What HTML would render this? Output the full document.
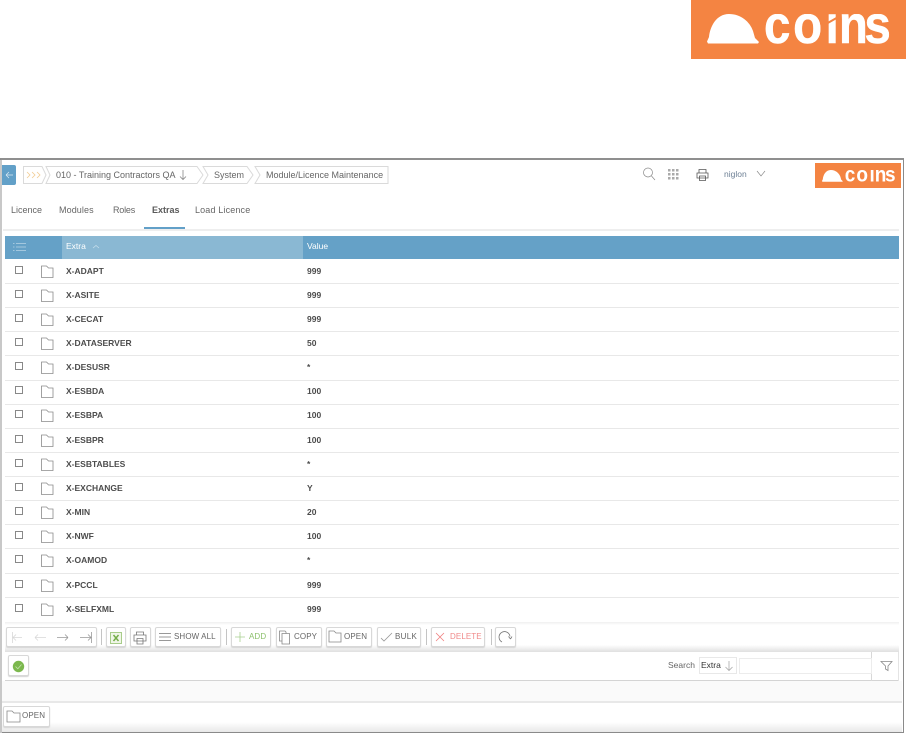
<!DOCTYPE html>
<html><head><meta charset="utf-8"><style>
html,body{margin:0;padding:0;background:#fff}
body{width:906px;height:733px;position:relative;overflow:hidden;font-family:"Liberation Sans",sans-serif;color:#444}
div,span,svg{position:absolute}
.t{white-space:nowrap;font-size:9px;line-height:12px;color:#666}
.k{left:66px;font-size:8.5px;font-weight:bold;color:#4c4c4c;white-space:nowrap;line-height:12px}
.v{left:307px;font-size:8.5px;font-weight:bold;color:#4c4c4c;white-space:nowrap;line-height:12px}
.s{left:5px;width:894px;height:1px;background:#e8e8e8}
.c{left:15px;width:6px;height:6px;border:1px solid #888;background:#fff}
.b{height:20px;top:627px;background:#fff;border:1px solid #d8d8d8;border-radius:2px;box-shadow:0 1px 1px #d4d4d4;box-sizing:border-box}
.l{font-size:8px;letter-spacing:.1px;white-space:nowrap;line-height:10px;color:#666;top:632px}
.sp{top:629px;width:1px;height:16px;background:#c4c4c4}
</style></head><body>
<svg style="left:691px;top:0" width="215" height="59" viewBox="0 0 215 59"><rect width="215" height="59" fill="#f48442"/><path d="M16 41.500L18 37C19 27 25 14 38 14C50 14 59 22 62 31L64 38L68 42L67 43.500H17Z" fill="#fff"/><text transform="translate(0 43) scale(.88 1)" x="83 116 153 168 197" font-family="Liberation Sans" font-weight="bold" font-size="54" fill="#fff" stroke="#fff" stroke-width=".5">coins</text><rect x="70" y="0" width="145" height="14" fill="#f48442"/><path d="M135 24L149 16" stroke="#f48442" stroke-width="2"/></svg>

<div style="left:0;top:158px;width:904px;height:575px;box-sizing:border-box;border:1px solid #8a8a8a;border-top:2px solid #8f8f8f;background:#fff"></div>
<div style="left:0;top:160px;width:2px;height:573px;background:#c8c8c8"></div>

<svg style="left:2px;top:165px" width="14" height="20"><path d="M0 0H12Q14 0 14 2V18Q14 20 12 20H0Z" fill="#62a0c8"/><path d="M4 10H11M4 10L7 7M4 10L7 13" stroke="#dcebf4" fill="none" stroke-width=".7"/></svg>
<svg style="left:22px;top:165px" width="370" height="21" fill="#fff" stroke="#dadada" stroke-width="1"><path d="M1.500 1.500H20L24 10L20 18.500H1.500Z"/><path d="M24 1.500H175L181 10L175 18.500H24L28 10Z"/><path d="M181 1.500H225L231 10L225 18.500H181L186 10Z"/><path d="M233 1.500H366V18.500H233L238 10Z"/><path d="M5 7L8 10L5 13M10 7L13 10L10 13M15 7L18 10L15 13" stroke="#f2cc92" fill="none" stroke-width=".8"/><path d="M161 5V14.500M158 11.500L161 14.500L164 11.500" stroke="#888" fill="none" stroke-width=".8"/></svg>
<div class="t" style="left:56px;top:169px">010 - Training Contractors QA</div>
<div class="t" style="left:214px;top:169px">System</div>
<div class="t" style="left:266px;top:169px">Module/Licence Maintenance</div>

<svg style="left:640px;top:165px" width="130" height="18" fill="none" stroke="#888" stroke-width=".7"><circle cx="8" cy="7.500" r="4.500"/><path d="M11.500 11L15 15"/><g fill="#aaa" stroke="none"><rect x="28" y="4" width="2.500" height="2.500"/><rect x="32" y="4" width="2.500" height="2.500"/><rect x="36" y="4" width="2.500" height="2.500"/><rect x="28" y="8" width="2.500" height="2.500"/><rect x="32" y="8" width="2.500" height="2.500"/><rect x="36" y="8" width="2.500" height="2.500"/><rect x="28" y="12" width="2.500" height="2.500"/><rect x="32" y="12" width="2.500" height="2.500"/><rect x="36" y="12" width="2.500" height="2.500"/></g><path d="M59 8V4.500h7V8M57 8h11v5h-11zM59.500 11h6v4.500h-6z" stroke="#555" stroke-width=".8"/><path d="M117 6L121 11L125 6"/></svg>
<div class="t" style="left:724px;top:168px;color:#6f8196;font-size:8.500px">niglon</div>
<svg style="left:815px;top:163px" width="86" height="25" viewBox="0 0 86 25"><rect width="86" height="25" fill="#f48442"/><g transform="translate(.6 1.400) scale(.4)"><path d="M16 41.500L18 37C19 27 25 14 38 14C50 14 59 22 62 31L64 38L68 42L67 43.500H17Z" fill="#fff"/><text transform="translate(0 43) scale(.88 1)" x="83 116 153 168 197" font-family="Liberation Sans" font-weight="bold" font-size="54" fill="#fff">coins</text><rect x="70" y="0" width="145" height="14" fill="#f48442"/></g></svg>

<div class="t" style="left:11px;top:204px">Licence</div>
<div class="t" style="left:59px;top:204px;letter-spacing:.1px">Modules</div>
<div class="t" style="left:113px;top:204px;letter-spacing:-.2px">Roles</div>
<div class="t" style="left:152px;top:204px;font-weight:bold;color:#5a5a5a">Extras</div>
<div class="t" style="left:195px;top:204px;letter-spacing:.15px">Load Licence</div>
<div style="left:3px;top:229px;width:896px;height:2px;background:#eee"></div>
<div style="left:144px;top:227px;width:41px;height:2px;background:#62a0c8"></div>

<div style="left:5px;top:236px;width:894px;height:23px;background:#65a1c7"></div>
<div style="left:62px;top:236px;width:241px;height:23px;background:#8ab8d3"></div>
<svg style="left:12px;top:241px" width="16" height="12" stroke="#b8d4e6" fill="none" stroke-width=".8"><path d="M1 2.500H2.500M1 6H2.500M1 9.500H2.500M4 2.500H14M4 6H14M4 9.500H14"/></svg>
<div class="t" style="left:66px;top:240px;color:#fff;font-size:8.500px">Extra</div>
<svg style="left:92px;top:244px" width="10" height="6" stroke="#c7dfec" fill="none" stroke-width=".8"><path d="M1 4L4 1.500L7 4"/></svg>
<div class="t" style="left:307px;top:240px;color:#fff;font-size:8.500px">Value</div>

<div class="s" style="top:283px"></div><div class="s" style="top:307px"></div><div class="s" style="top:331px"></div><div class="s" style="top:355px"></div><div class="s" style="top:380px"></div><div class="s" style="top:404px"></div><div class="s" style="top:428px"></div><div class="s" style="top:452px"></div><div class="s" style="top:476px"></div><div class="s" style="top:500px"></div><div class="s" style="top:524px"></div><div class="s" style="top:548px"></div><div class="s" style="top:573px"></div><div class="s" style="top:597px"></div>

<div class="c" style="top:266px"></div><div class="c" style="top:290px"></div><div class="c" style="top:314px"></div><div class="c" style="top:338px"></div><div class="c" style="top:362px"></div><div class="c" style="top:386px"></div><div class="c" style="top:410px"></div><div class="c" style="top:435px"></div><div class="c" style="top:459px"></div><div class="c" style="top:483px"></div><div class="c" style="top:507px"></div><div class="c" style="top:531px"></div><div class="c" style="top:555px"></div><div class="c" style="top:580px"></div><div class="c" style="top:604px"></div>

<svg style="left:40px;top:264px" width="15" height="352" fill="none" stroke="#8a8a8a" stroke-width=".8"><defs><path id="f" d="M1.500 1H6.500L8.500 3H13V12.500H1.500Z"/></defs><use href="#f" y="1"/><use href="#f" y="25"/><use href="#f" y="49"/><use href="#f" y="73"/><use href="#f" y="97"/><use href="#f" y="121"/><use href="#f" y="145"/><use href="#f" y="170"/><use href="#f" y="194"/><use href="#f" y="218"/><use href="#f" y="242"/><use href="#f" y="266"/><use href="#f" y="290"/><use href="#f" y="315"/><use href="#f" y="339"/></svg>

<div class="k" style="top:265px">X-ADAPT</div><div class="v" style="top:265px">999</div>
<div class="k" style="top:289px">X-ASITE</div><div class="v" style="top:289px">999</div>
<div class="k" style="top:313px">X-CECAT</div><div class="v" style="top:313px">999</div>
<div class="k" style="top:337px">X-DATASERVER</div><div class="v" style="top:337px">50</div>
<div class="k" style="top:361px">X-DESUSR</div><div class="v" style="top:361px">*</div>
<div class="k" style="top:385px">X-ESBDA</div><div class="v" style="top:385px">100</div>
<div class="k" style="top:409px">X-ESBPA</div><div class="v" style="top:409px">100</div>
<div class="k" style="top:434px">X-ESBPR</div><div class="v" style="top:434px">100</div>
<div class="k" style="top:458px">X-ESBTABLES</div><div class="v" style="top:458px">*</div>
<div class="k" style="top:482px">X-EXCHANGE</div><div class="v" style="top:482px">Y</div>
<div class="k" style="top:506px">X-MIN</div><div class="v" style="top:506px">20</div>
<div class="k" style="top:530px">X-NWF</div><div class="v" style="top:530px">100</div>
<div class="k" style="top:554px">X-OAMOD</div><div class="v" style="top:554px">*</div>
<div class="k" style="top:579px">X-PCCL</div><div class="v" style="top:579px">999</div>
<div class="k" style="top:603px">X-SELFXML</div><div class="v" style="top:603px">999</div>

<div style="left:5px;top:622px;width:894px;height:30px;background:linear-gradient(#efefef 0,#fff 3px,#fff 23px,#e0e0e0 30px)"></div>
<div class="b" style="left:6px;width:91px"></div>
<svg style="left:10px;top:630px" width="84" height="14" fill="none" stroke="#d8d8d8" stroke-width=".8"><path d="M2.500 2V13M3 7.500H12M3 7.500L6 4.500M3 7.500L6 10.500"/><path d="M25 7.500H36M25 7.500L28 4.500M25 7.500L28 10.500"/><path d="M47 7.500H58M58 7.500L55 4.500M58 7.500L55 10.500" stroke="#999"/><path d="M70 7.500H81M81 7.500L78 4.500M81 7.500L78 10.500M81.500 2V13" stroke="#999"/></svg>
<div class="sp" style="left:101px"></div>
<div class="b" style="left:106px;width:20px"></div>
<svg style="left:109px;top:631px" width="14" height="14"><rect x="1.500" y="1.500" width="11" height="11" fill="#f0f6e8" stroke="#a8cc8a"/><path d="M4.500 4L9.500 10M9.500 4L4.500 10" stroke="#74ad48" stroke-width="1.500"/></svg>
<div class="b" style="left:130px;width:21px"></div>
<svg style="left:132px;top:630px" width="16" height="15" fill="none" stroke="#777" stroke-width=".8"><path d="M4.500 5V2H11.500V5M2 5H14V11H2ZM5 8.500H11V14H5Z"/></svg>
<div class="b" style="left:155px;width:66px"></div>
<svg style="left:158px;top:631px" width="14" height="12" stroke="#777" fill="none" stroke-width=".8"><path d="M1 2.500H13M1 6H13M1 9.500H13"/></svg>
<div class="l" style="left:174px">SHOW ALL</div>
<div class="sp" style="left:226px"></div>
<div class="b" style="left:231px;width:40px"></div>
<svg style="left:234px;top:631px" width="12" height="12" stroke="#a8d090" fill="none" stroke-width=".8"><path d="M6 1V11M1 6H11"/></svg>
<div class="l" style="left:249px;color:#8cc06c">ADD</div>
<div class="b" style="left:276px;width:46px"></div>
<svg style="left:278px;top:629px" width="14" height="16" fill="none" stroke="#888" stroke-width=".8"><path d="M1.500 2H7L8 3V12H1.500Z"/><path d="M4 4.500H11.500V15H4Z" fill="#fff"/></svg>
<div class="l" style="left:294px">COPY</div>
<div class="b" style="left:326px;width:46px"></div>
<svg style="left:328px;top:630px" width="15" height="14" fill="none" stroke="#888" stroke-width=".8"><path d="M1 1H6L8 3H13V12H1Z"/></svg>
<div class="l" style="left:344px">OPEN</div>
<div class="b" style="left:377px;width:44px"></div>
<svg style="left:380px;top:631px" width="14" height="12" fill="none" stroke="#999" stroke-width=".8"><path d="M1 7L4 10L12 2"/></svg>
<div class="l" style="left:395px;letter-spacing:.3px">BULK</div>
<div class="sp" style="left:426px"></div>
<div class="b" style="left:431px;width:54px"></div>
<svg style="left:434px;top:631px" width="12" height="12" stroke="#f08080" fill="none" stroke-width=".8"><path d="M2 2L10 10M10 2L2 10"/></svg>
<div class="l" style="left:450px;color:#f08a8a">DELETE</div>
<div class="sp" style="left:491px"></div>
<div class="b" style="left:495px;width:21px"></div>
<svg style="left:497px;top:629px" width="16" height="16" fill="none" stroke="#777" stroke-width=".8"><path d="M5 13A5.500 5.500 0 1 1 13 7.500M13.500 10L11.500 7.500M13.500 10L15 7.500"/></svg>

<div style="left:5px;top:680px;width:894px;height:1px;background:#d4d4d4"></div>
<div style="left:871px;top:652px;width:1px;height:29px;background:#d8d8d8"></div>
<div style="left:898px;top:652px;width:1px;height:29px;background:#e4e4e4"></div>
<div class="b" style="left:8px;top:655px;width:21px;height:21px"></div>
<svg style="left:12px;top:660px" width="13" height="13"><circle cx="6.500" cy="6.500" r="5.700" fill="#7cb84e"/><path d="M3.500 6.500L5.800 8.800L9.500 4.500" stroke="#c5e2ae" fill="none" stroke-width=".8"/></svg>
<div class="t" style="left:668px;top:659px;font-size:8.500px">Search</div>
<div style="left:699px;top:657px;width:38px;height:17px;box-sizing:border-box;border:1px solid #e8e8e8"></div>
<div class="t" style="left:701px;top:659px;font-size:8.500px;color:#333">Extra</div>
<svg style="left:724px;top:660px" width="10" height="12" stroke="#aaa" fill="none" stroke-width=".8"><path d="M5 1V10M1.500 7L5 10.500L8.500 7"/></svg>
<div style="left:739px;top:658px;width:133px;height:16px;box-sizing:border-box;border:1px solid #ececec"></div>
<svg style="left:880px;top:660px" width="13" height="12" fill="none" stroke="#888" stroke-width=".8"><path d="M1 1.500H12L8 6V10.500L5.500 9V6Z"/></svg>

<div style="left:2px;top:681px;width:900px;height:21px;background:#fafafa"></div>
<div style="left:2px;top:701px;width:900px;height:2px;background:#e8e8e8"></div>
<div style="left:2px;top:722px;width:900px;height:10px;background:linear-gradient(#fff,#e8e8e8)"></div>
<div class="b" style="left:3px;top:706px;width:47px;height:21px"></div>
<svg style="left:6px;top:710px" width="15" height="14" fill="none" stroke="#888" stroke-width=".8"><path d="M1 1H6L8 3H14V12H1Z"/></svg>
<div class="l" style="left:22px;top:711px">OPEN</div>
</body></html>
